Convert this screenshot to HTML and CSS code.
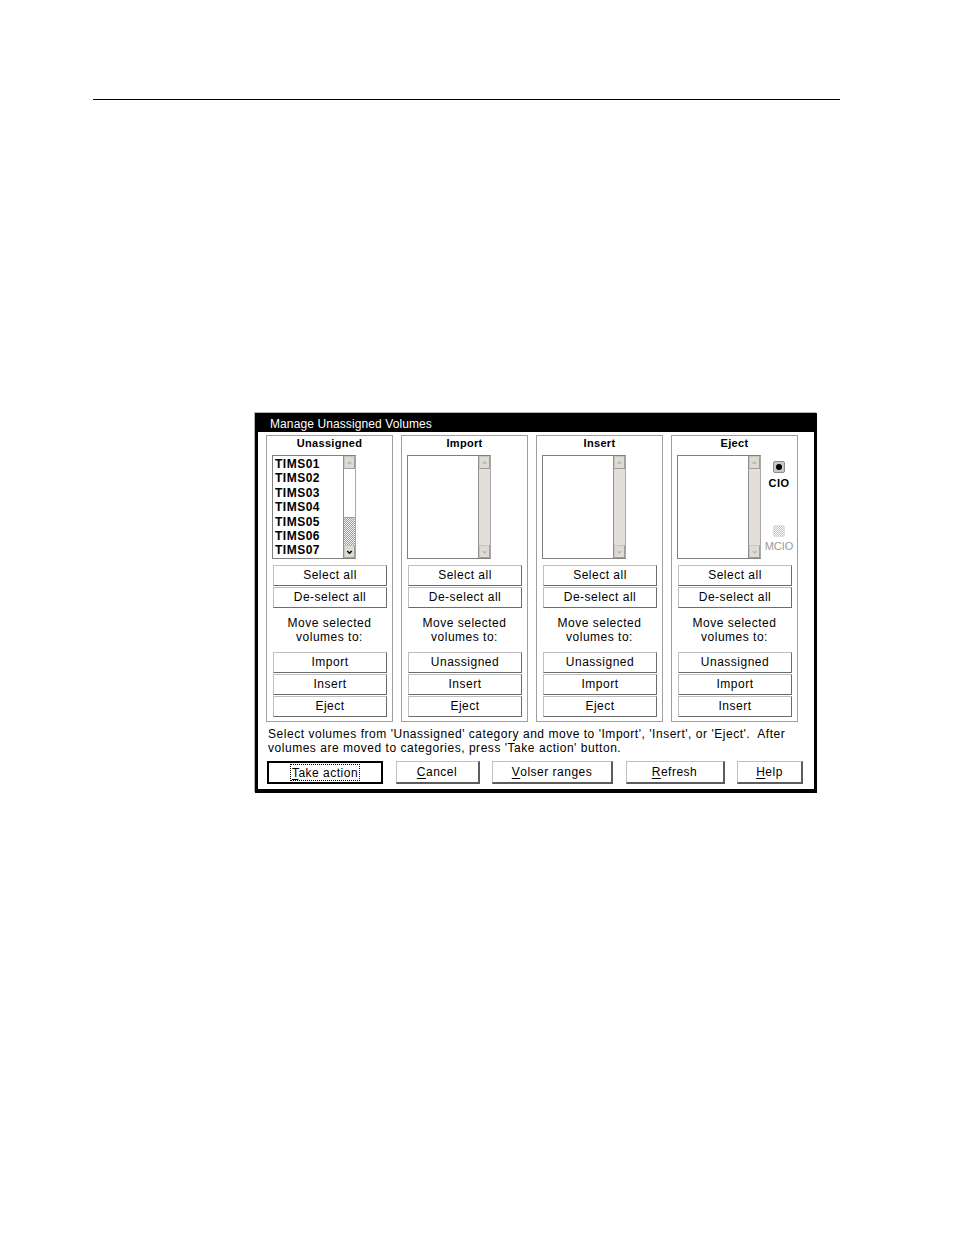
FILE: index.html
```html
<!DOCTYPE html>
<html>
<head>
<meta charset="utf-8">
<link rel="stylesheet" href="styles.css">
</head>
<body>
<div class="rule"></div>
<div class="dialog">
  <div class="titlebar">Manage Unassigned Volumes</div>
  <div class="content">
    <div class="panels">
      <div class="panel">
        <div class="panel-head">Unassigned</div>
        <div class="listrow">
          <div class="listbox">
            <div class="items">
              <div>TIMS01</div><div>TIMS02</div><div>TIMS03</div><div>TIMS04</div><div>TIMS05</div><div>TIMS06</div><div>TIMS07</div>
            </div>
            <div class="scrollbar">
              <div class="sb-btn"><svg width="10" height="10" viewBox="0 0 10 10"><polyline points="3,6 5,4 7,6" class="chev dis"/></svg></div>
              <div class="sb-thumb"></div>
              <div class="sb-dither"></div>
              <div class="sb-btn"><svg width="10" height="10" viewBox="0 0 10 10"><polyline points="2.5,4 5,6.5 7.5,4" class="chev on"/></svg></div>
            </div>
          </div>
        </div>
        <div class="btncol top">
          <div class="btn">Select all</div>
          <div class="btn">De-select all</div>
        </div>
        <div class="move">Move selected<br>volumes to:</div>
        <div class="btncol">
          <div class="btn">Import</div>
          <div class="btn">Insert</div>
          <div class="btn">Eject</div>
        </div>
      </div>

      <div class="panel">
        <div class="panel-head">Import</div>
        <div class="listrow">
          <div class="listbox">
            <div class="items"></div>
            <div class="scrollbar">
              <div class="sb-btn"><svg width="10" height="10" viewBox="0 0 10 10"><polyline points="3,6 5,4 7,6" class="chev dis"/></svg></div>
              <div class="sb-track"></div>
              <div class="sb-btn"><svg width="10" height="10" viewBox="0 0 10 10"><polyline points="3,4 5,6 7,4" class="chev dis"/></svg></div>
            </div>
          </div>
        </div>
        <div class="btncol top">
          <div class="btn">Select all</div>
          <div class="btn">De-select all</div>
        </div>
        <div class="move">Move selected<br>volumes to:</div>
        <div class="btncol">
          <div class="btn">Unassigned</div>
          <div class="btn">Insert</div>
          <div class="btn">Eject</div>
        </div>
      </div>

      <div class="panel">
        <div class="panel-head">Insert</div>
        <div class="listrow">
          <div class="listbox">
            <div class="items"></div>
            <div class="scrollbar">
              <div class="sb-btn"><svg width="10" height="10" viewBox="0 0 10 10"><polyline points="3,6 5,4 7,6" class="chev dis"/></svg></div>
              <div class="sb-track"></div>
              <div class="sb-btn"><svg width="10" height="10" viewBox="0 0 10 10"><polyline points="3,4 5,6 7,4" class="chev dis"/></svg></div>
            </div>
          </div>
        </div>
        <div class="btncol top">
          <div class="btn">Select all</div>
          <div class="btn">De-select all</div>
        </div>
        <div class="move">Move selected<br>volumes to:</div>
        <div class="btncol">
          <div class="btn">Unassigned</div>
          <div class="btn">Import</div>
          <div class="btn">Eject</div>
        </div>
      </div>

      <div class="panel">
        <div class="panel-head">Eject</div>
        <div class="listrow">
          <div class="listbox">
            <div class="items"></div>
            <div class="scrollbar">
              <div class="sb-btn"><svg width="10" height="10" viewBox="0 0 10 10"><polyline points="3,6 5,4 7,6" class="chev dis"/></svg></div>
              <div class="sb-track"></div>
              <div class="sb-btn"><svg width="10" height="10" viewBox="0 0 10 10"><polyline points="3,4 5,6 7,4" class="chev dis"/></svg></div>
            </div>
          </div>
          <div class="radios">
            <div class="radio on"><span class="dot"></span></div>
            <div class="rlabel">CIO</div>
            <div class="radio off second"></div>
            <div class="rlabel dim">MCIO</div>
          </div>
        </div>
        <div class="btncol top">
          <div class="btn">Select all</div>
          <div class="btn">De-select all</div>
        </div>
        <div class="move">Move selected<br>volumes to:</div>
        <div class="btncol">
          <div class="btn">Unassigned</div>
          <div class="btn">Import</div>
          <div class="btn">Insert</div>
        </div>
      </div>
    </div>

    <div class="desc">Select volumes from 'Unassigned' category and move to 'Import', 'Insert', or 'Eject'.&nbsp; After<br>volumes are moved to categories, press 'Take action' button.</div>

    <div class="actions">
      <div class="abtn default w-take"><span class="focus"><u>T</u>ake action</span></div>
      <div class="abtn w-cancel"><u>C</u>ancel</div>
      <div class="abtn w-volser"><u>V</u>olser ranges</div>
      <div class="abtn w-refresh"><u>R</u>efresh</div>
      <div class="abtn w-help"><u>H</u>elp</div>
    </div>
  </div>
</div>
</body>
</html>
```

FILE: styles.css
```css
* { box-sizing: border-box; }
body {
  margin: 0;
  background: #fff;
  font-family: "Liberation Sans", Arial, sans-serif;
  color: #000;
}
.rule {
  margin: 99px 0 0 93px;
  width: 747px;
  height: 0;
  border-top: 1px solid #000;
}
.dialog {
  margin: 313px 0 0 255px;
  width: 562px;
  border: 3px solid #000;
  border-bottom-width: 4px;
  background: #fff;
  box-shadow: -1px -1px 0 #b4b4b4, 0 2px 0 #e0e0e0;
}
.titlebar {
  background: #000;
  color: #fff;
  height: 16px;
  line-height: 16px;
  font-size: 12px;
  padding: 0 0 0 12px;
  letter-spacing: 0.1px;
  overflow: hidden;
}
.content {
  padding: 3px 16px 5px 8px;
}
.panels {
  display: flex;
  gap: 8px;
}
.panel {
  width: 127px;
  height: 287px;
  border: 1px solid #a0a0a0;
}
.panel-head {
  text-align: center;
  font-size: 11px;
  font-weight: bold;
  line-height: 14px;
  letter-spacing: 0.3px;
}
.listrow {
  display: flex;
  margin-top: 5px;
  padding-left: 5px;
}
.listbox {
  width: 84px;
  height: 104px;
  border: 1px solid #808080;
  border-right-color: #a8a8a8;
  display: flex;
}
.items {
  flex: 1;
  padding: 1px 0 0 2px;
  font-size: 12px;
  font-weight: bold;
  line-height: 14.4px;
  letter-spacing: 0.5px;
}
.scrollbar {
  width: 12px;
  border-left: 1px solid #909090;
  display: flex;
  flex-direction: column;
  background: #fff;
}
.sb-btn {
  height: 13px;
  background: #dedad4;
  border: 1px solid #c8c4be;
  border-right-color: #a09c96;
  border-bottom-color: #a09c96;
  display: flex;
  align-items: center;
  justify-content: center;
}
.chev { fill: none; stroke-width: 1.2; }
.chev.dis { stroke: #b0aca6; }
.chev.on { stroke: #000; stroke-width: 1.6; }
.sb-thumb {
  height: 49px;
  background: #fff;
  border-bottom: 1px solid #a0a0a0;
}
.sb-dither {
  flex: 1;
  background: repeating-conic-gradient(#9a9a9a 0 25%, #f4f4f4 0 50%) 0 0 / 2px 2px;
}
.sb-track {
  flex: 1;
  background: #e2ded8;
}
.radios {
  flex: 1;
  display: flex;
  flex-direction: column;
  align-items: center;
  padding-top: 6px;
}
.radio {
  width: 12px;
  height: 12px;
  border-radius: 2px;
  display: flex;
  align-items: center;
  justify-content: center;
}
.radio.on {
  background: #c8c8c8;
  border: 1px solid #8c8c8c;
}
.radio .dot {
  width: 6px;
  height: 6px;
  border-radius: 50%;
  background: #000;
}
.radio.off {
  background: repeating-conic-gradient(#c4c4c4 0 25%, #fafafa 0 50%) 0 0 / 2px 2px;
  border: 1px solid #e0e0e0;
}
.radio.second { margin-top: 35px; }
.rlabel {
  font-size: 11px;
  font-weight: bold;
  line-height: 14px;
  margin-top: 3px;
  letter-spacing: 0.4px;
}
.rlabel.dim {
  color: #9a9a9a;
  font-weight: normal;
  margin-top: 2px;
  letter-spacing: 0;
}
.btncol {
  display: flex;
  flex-direction: column;
  gap: 1px;
  padding: 0 5px 0 6px;
}
.btncol.top { margin-top: 6px; }
.btn {
  height: 21px;
  border: 1px solid;
  border-color: #c0c0c0 #6c6c6c #6c6c6c #c0c0c0;
  background: #fff;
  text-align: center;
  font-size: 12px;
  line-height: 19px;
  letter-spacing: 0.5px;
}
.move {
  text-align: center;
  font-size: 12px;
  line-height: 14px;
  margin: 8px 0 8px;
  letter-spacing: 0.5px;
}
.desc {
  margin-top: 5px;
  padding-left: 2px;
  font-size: 12px;
  line-height: 14px;
  letter-spacing: 0.53px;
  white-space: nowrap;
}
.actions {
  display: flex;
  justify-content: space-between;
  margin: 6px 0 0 1px;
  width: 536px;
}
.abtn {
  height: 23px;
  border: 1px solid;
  border-color: #c0c0c0 #5c5c5c #5c5c5c #c0c0c0;
  border-width: 1px 2px 2px 1px;
  background: #fff;
  display: flex;
  align-items: center;
  justify-content: center;
  font-size: 12px;
  letter-spacing: 0.5px;
}
.abtn u { text-decoration-thickness: 1px; text-underline-offset: 2px; }
.abtn.default {
  border: 2px solid #000;
}
.focus {
  border: 1px dotted #000;
  padding: 1px 1px 0;
  line-height: 14px;
}
.w-take { width: 116px; }
.w-cancel { width: 84px; }
.w-volser { width: 121px; }
.w-refresh { width: 99px; }
.w-help { width: 66px; }
```
